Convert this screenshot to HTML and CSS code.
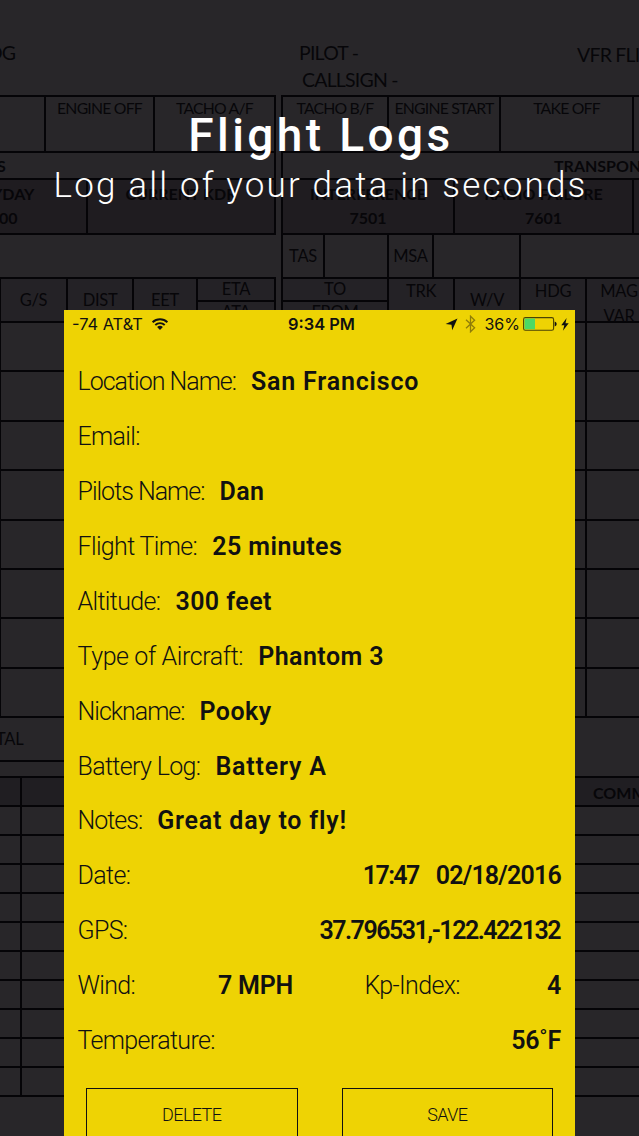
FILE: index.html
```html
<!DOCTYPE html>
<html lang="en">

<head>
    <meta charset="UTF-8">
    <meta name="viewport" content="width=device-width, initial-scale=1.0">
    <title>Flight Logs</title>
    <link rel="stylesheet" href="styles.css">
</head>

<body>
    <div class="main">
        <!-- paper flight log behind everything -->
        <div class="sheet">
            <div class="page left">
                <div class="page-head"><span class="log">OG</span></div>
                <div class="row times">
                    <div class="cell w44"></div>
                    <div class="cell w109">ENGINE OFF</div>
                    <div class="cell grow">TACHO A/F</div>
                </div>
                <div class="row band"><b>S</b></div>
                <div class="row codes">
                    <div class="cell w86"><b class="mayday">YDAY</b><b class="squawk">00</b></div>
                    <div class="cell grow"><b>CURRENT KDR</b></div>
                </div>
                <div class="row gap"></div>
                <div class="row heads">
                    <div class="cell w66 low">G/S</div>
                    <div class="cell w66 low">DIST</div>
                    <div class="cell w64 low">EET</div>
                    <div class="cell grow split"><span>ETA</span><span>ATA</span></div>
                </div>
                <div class="row leg"></div>
                <div class="row leg"></div>
                <div class="row leg"></div>
                <div class="row leg"></div>
                <div class="row leg"></div>
                <div class="row leg"></div>
                <div class="row leg"></div>
                <div class="row leg"></div>
                <div class="row total"><span>TAL</span></div>
                <div class="row spacer"></div>
                <div class="notes-table">
                    <div class="row note dark"></div>
                    <div class="row note"></div>
                    <div class="row note"></div>
                    <div class="row note"></div>
                    <div class="row note"></div>
                    <div class="row note"></div>
                    <div class="row note"></div>
                    <div class="row note"></div>
                    <div class="row note"></div>
                    <div class="row note"></div>
                    <div class="row note"></div>
                </div>
                <div class="row"></div>
            </div>

            <div class="page right">
                <div class="page-head">
                    <div class="pilot"><span>PILOT -</span><span class="callsign">CALLSIGN -</span></div>
                    <span class="vfr">VFR FLIGHT</span>
                </div>
                <div class="row times">
                    <div class="cell w106">TACHO B/F</div>
                    <div class="cell w112">ENGINE START</div>
                    <div class="cell w133">TAKE OFF</div>
                    <div class="cell grow"></div>
                </div>
                <div class="row band edge"><b class="transponder">TRANSPONDER</b></div>
                <div class="row codes">
                    <div class="cell w172"><b>INTERFERENCE</b><b>7501</b></div>
                    <div class="cell w179"><b>RADIO FAILURE</b><b>7601</b></div>
                    <div class="cell grow"></div>
                </div>
                <div class="row gap">
                    <div class="cell w42">TAS</div>
                    <div class="cell w64"></div>
                    <div class="cell w45">MSA</div>
                    <div class="cell w87"></div>
                    <div class="cell grow"></div>
                </div>
                <div class="row heads">
                    <div class="cell w106 split"><span>TO</span><span>FROM</span></div>
                    <div class="cell w66">TRK</div>
                    <div class="cell w66 low">W/V</div>
                    <div class="cell w66">HDG</div>
                    <div class="cell w66"><span>MAG</span><span>VAR</span></div>
                </div>
                <div class="row leg"></div>
                <div class="row leg"></div>
                <div class="row leg"></div>
                <div class="row leg"></div>
                <div class="row leg"></div>
                <div class="row leg"></div>
                <div class="row leg"></div>
                <div class="row leg"></div>
                <div class="row remarks"></div>
                <div class="row note dark"><b class="comments">COMMENTS</b></div>
                <div class="row note"></div>
                <div class="row note"></div>
                <div class="row note"></div>
                <div class="row note"></div>
                <div class="row note"></div>
                <div class="row note"></div>
                <div class="row note"></div>
                <div class="row note"></div>
                <div class="row note"></div>
                <div class="row note"></div>
                <div class="row"></div>
            </div>
        </div>

        <div class="header">
            <h1>Flight Logs</h1>
            <p>Log all of your data in seconds</p>
        </div>

        <div class="phone">
            <div class="status">
                <div class="carrier">
                    <span>-74 AT&amp;T</span>
                    <svg width="18" height="14" viewBox="0 0 18 14">
                        <path d="M1.6 5.2a10.6 10.6 0 0 1 14.8 0M4.3 8a6.8 6.8 0 0 1 9.4 0" fill="none" stroke="#111" stroke-width="1.9" />
                        <path d="M9 13 6.1 10.1a4.2 4.2 0 0 1 5.8 0z" fill="#111" />
                    </svg>
                </div>
                <div class="clock">9:34 PM</div>
                <div class="power">
                    <svg class="arrow" width="13" height="13" viewBox="0 0 13 13">
                        <path d="M12.5 .5 7.2 12.2 6.5 6.8 .6 6z" fill="#111" />
                    </svg>
                    <svg class="bluetooth" width="11" height="18" viewBox="0 0 11 18">
                        <path d="M1 4.8 9.6 12.8 5.5 16.8V1.2L9.6 5.2 1 13.2" fill="none" stroke="#8f7d08" stroke-width="1.3" />
                    </svg>
                    <span>36%</span>
                    <svg class="battery" width="34" height="14" viewBox="0 0 34 14">
                        <rect x=".6" y=".6" width="30" height="12.6" rx="1.8" fill="none" stroke="#4b4304" stroke-width="1.1" />
                        <rect x="1.5" y="1.5" width="10.5" height="10.8" fill="#4cd964" />
                        <path d="M31.7 4.4q2 .6 2 2.5t-2 2.5z" fill="#111" />
                    </svg>
                    <svg class="bolt" width="8" height="13" viewBox="0 0 8 13">
                        <path d="M5.6 0 .3 7.2h3L1.9 12.8 7.7 5.2H4.5z" fill="#111" />
                    </svg>
                </div>
            </div>

            <div class="fields">
                <div class="field"><label class="tight">Location Name:</label><b class="loose">San Francisco</b></div>
                <div class="field"><label>Email:</label></div>
                <div class="field"><label class="tight">Pilots Name:</label><b>Dan</b></div>
                <div class="field"><label>Flight Time:</label><b>25 minutes</b></div>
                <div class="field"><label>Altitude:</label><b>300 feet</b></div>
                <div class="field"><label class="snug">Type of Aircraft:</label><b>Phantom 3</b></div>
                <div class="field"><label class="tight">Nickname:</label><b>Pooky</b></div>
                <div class="field"><label>Battery Log:</label><b class="loose">Battery A</b></div>
                <div class="field"><label class="tight">Notes:</label><b class="loose">Great day to fly!</b></div>
                <div class="field wide"><label>Date:</label><b class="date"><span>17:47</span><span>02/18/2016</span></b></div>
                <div class="field wide"><label>GPS:</label><b class="gps">37.796531,-122.422132</b></div>
                <div class="field pair">
                    <div class="wind"><label>Wind:</label><b class="plain">7 MPH</b></div>
                    <div class="kp"><label>Kp-Index:</label><b class="plain">4</b></div>
                </div>
                <div class="field wide"><label>Temperature:</label><b class="plain">56˚F</b></div>
            </div>

            <div class="buttons">
                <button>DELETE</button>
                <button>SAVE</button>
            </div>
        </div>
    </div>
</body>

</html>
```
FILE: styles.css
```css
* {
    box-sizing: border-box;
}

body {
    margin: 0;
    font-family: Roboto, "Liberation Sans", sans-serif;
}

.main {
    position: relative;
    width: 639px;
    height: 1136px;
    background-color: #282629;
    overflow: hidden;
}

/* Paper log */
.sheet {
    position: absolute;
    inset: 0;
    display: flex;
    gap: 5px;
    overflow: hidden;
    font-family: Lato, Carlito, sans-serif;
    font-size: 16.5px;
    line-height: 20px;
    letter-spacing: -0.3px;
    color: #070609;
}

.sheet b {
    font-size: 16px;
    letter-spacing: 0;
}

.page {
    flex: none;
    white-space: nowrap;
}

.left {
    width: 276px;
}

.right {
    width: 370px;
}

.page-head {
    display: flex;
    height: 95px;
    padding-top: 39px;
    font-size: 19.5px;
    line-height: 27px;
    letter-spacing: -0.8px;
}

.pilot {
    display: flex;
    flex: none;
    flex-direction: column;
    width: 277px;
    padding-left: 18px;
}

.callsign {
    padding-left: 3px;
}

.vfr {
    padding: 2px 0 0 19px;
}

.log {
    margin-left: -13px;
}

.row {
    display: flex;
    border-top: 2px solid #050407;
}

.cell {
    display: flex;
    flex: none;
    flex-direction: column;
    align-items: center;
    border-left: 2px solid #050407;
}

.left .cell:first-child {
    border-left: none;
}

.left .cell:last-child {
    border-right: 2px solid #050407;
}

.row .grow {
    flex: 1;
}

.w42 { width: 42px; }
.w44 { width: 44px; }
.w45 { width: 45px; }
.w64 { width: 64px; }
.w66 { width: 66px; }
.w86 { width: 86px; }
.w87 { width: 87px; }
.w106 { width: 106px; }
.w109 { width: 109px; }
.w112 { width: 112px; }
.w133 { width: 133px; }
.w172 { width: 172px; }
.w179 { width: 179px; }

.times {
    height: 56px;
    font-size: 15.8px;
    line-height: 21px;
    letter-spacing: -0.8px;
}

.band {
    height: 27px;
    padding-top: 3px;
}

.left .band {
    border-right: 2px solid #050407;
}

.left .band b {
    margin-left: -3px;
}

.edge {
    border-left: 2px solid #050407;
}

.transponder {
    margin-left: 271px;
}

.codes {
    height: 55px;
    line-height: 24px;
    background-color: #1f1c20;
}

.codes .cell {
    padding-top: 2px;
}

.left .codes .w86 {
    align-items: flex-start;
}

.mayday {
    margin-left: -8px;
}

.squawk {
    margin-left: -1px;
}

.gap {
    height: 44px;
    line-height: 42px;
}

.heads {
    height: 44px;
    line-height: 25px;
    background-color: #242226;
}

.left .heads .cell:first-child {
    border-left: 1px solid #050407;
}

.low {
    padding-top: 9px;
}

.split {
    align-items: stretch;
    text-align: center;
    line-height: 21px;
}

.split span + span {
    border-top: 2px solid #050407;
}

.leg {
    height: 49.4px;
}

.left .leg {
    border-left: 1px solid #050407;
}

.right .leg::before {
    content: "";
    width: 304px;
    border-right: 2px solid #050407;
}

.total {
    height: 44px;
    line-height: 42px;
}

.total span {
    margin-left: -4px;
}

.spacer {
    height: 16px;
}

.remarks {
    height: 60px;
}

.note {
    height: 29px;
}

.notes-table .note::before {
    content: "";
    width: 20px;
    border-right: 2px solid #050407;
}

.dark {
    background-color: #201e22;
}

.comments {
    padding: 5px 0 0 312px;
}

/* Caption */
.header {
    position: relative;
    height: 310px;
    padding-top: 107px;
    color: #fff;
    text-align: center;
    white-space: nowrap;
}

.header h1 {
    margin: 0 0 0 3px;
    font-size: 46px;
    font-weight: 500;
    line-height: 56px;
    letter-spacing: 3.4px;
}

.header p {
    margin: 0 0 0 2px;
    font-size: 35px;
    font-weight: 300;
    line-height: 46px;
    letter-spacing: 2.17px;
}

/* App screen */
.phone {
    position: relative;
    width: 511px;
    height: 826px;
    margin-left: 64px;
    background-color: #eed304;
    color: #111;
    overflow: hidden;
}

.status {
    display: grid;
    grid-template-columns: 1fr auto 1fr;
    align-items: center;
    height: 28px;
    padding: 0 6px 0 8px;
    font-family: Inter, sans-serif;
    font-size: 16.4px;
}

.carrier,
.power {
    display: flex;
    align-items: center;
}

.carrier {
    gap: 8px;
}

.clock {
    padding-left: 2px;
    font-weight: 600;
}

.power {
    justify-content: flex-end;
}

.power span {
    font-size: 16px;
}

.bluetooth {
    margin: 0 8px 0 7px;
}

.battery {
    margin: 0 4px 0 3px;
}

.fields {
    padding: 16px 14px 0;
    white-space: nowrap;
}

.field {
    display: flex;
    align-items: center;
    height: 54.95px;
    font-size: 25px;
}

.field label {
    margin-left: -0.5px;
    font-weight: 300;
    letter-spacing: -0.65px;
}

.field .tight {
    letter-spacing: -1px;
}

.field .snug {
    letter-spacing: -0.4px;
}

.field b {
    margin-left: 15px;
    font-weight: 600;
    letter-spacing: 0.45px;
}

.field .loose {
    letter-spacing: 0.8px;
}

.field .plain {
    letter-spacing: -0.2px;
}

.field .date {
    display: flex;
    gap: 17px;
    letter-spacing: -1.6px;
}

.date span:last-child {
    letter-spacing: -0.8px;
}

.field .gps {
    letter-spacing: -1.5px;
    padding-right: 1px;
}

.wide,
.wind,
.kp {
    justify-content: space-between;
}

.wind,
.kp {
    display: flex;
}

.wind {
    width: 215px;
}

.kp {
    width: 196px;
}

.pair {
    justify-content: space-between;
}

.buttons {
    display: flex;
    gap: 44px;
    padding: 19.6px 22px 0;
}

.buttons button {
    width: 212px;
    height: 54px;
    padding: 0;
    border: 1.5px solid #111;
    background: none;
    color: #111;
    font-family: inherit;
    font-size: 18px;
    font-weight: 300;
    letter-spacing: -0.6px;
}
```
